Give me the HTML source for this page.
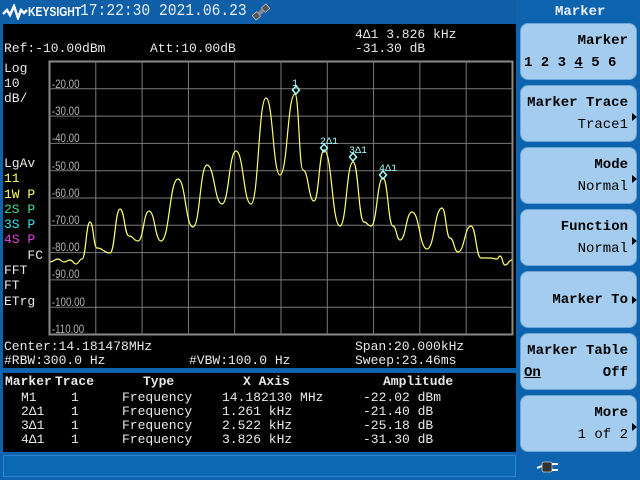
<!DOCTYPE html>
<html><head><meta charset="utf-8">
<style>
*{margin:0;padding:0;box-sizing:border-box}
body{width:640px;height:480px;background:#0d63ad;position:relative;overflow:hidden;font-family:"Liberation Mono",monospace;color:#e8e8e8}
.a{position:absolute;white-space:pre}
.t{font-size:13px;line-height:14px}
.hdr{position:absolute;left:0;top:0;width:516px;height:24px;background:#0f5ea8}
.main{position:absolute;left:3px;top:24px;width:513px;height:344px;background:#000}
.tbl{position:absolute;left:3px;top:373px;width:513px;height:79px;background:#000}
.status{position:absolute;left:3px;top:455px;width:513px;height:22px;background:#0b68b2;border:1px solid #2c84cc}
.sk{position:absolute;left:520px;width:117px;height:57px;background:#a3ccee;border-radius:8px;border:1px solid #6fa6d6;color:#000;font-family:"Liberation Mono",monospace}
.sk .l1{position:absolute;right:8px;top:9px;font-weight:bold;font-size:14px}
.sk .l2{position:absolute;right:8px;top:31px;font-size:14px}
.arr{position:absolute;right:-1px;top:27px;width:0;height:0;border-left:5px solid #000;border-top:4px solid transparent;border-bottom:4px solid transparent}
.b{font-weight:bold}
</style></head><body>
<div class="hdr"></div>
<svg class="a" style="left:2px;top:4px" width="26" height="16" viewBox="0 0 26 16"><path d="M1 10 L5 6 L8 11 L12 2 L16 14 L19 6 L22 9 L25 6" stroke="#fff" stroke-width="2.5" fill="none"/></svg>
<div class="a" style="left:28px;top:4px;font-family:'Liberation Sans',sans-serif;font-weight:bold;font-size:13px;color:#fff;transform:scaleX(0.8);transform-origin:left">KEYSIGHT</div>
<div class="a" style="left:80px;top:2px;font-size:17px;color:#e8f0ff;transform:scaleX(0.86);transform-origin:left">17:22:30 2021.06.23</div>
<svg class="a" style="left:250px;top:2px" width="22" height="20" viewBox="0 0 22 20"><g transform="rotate(-40 11 10)"><rect x="2" y="7" width="6" height="6" fill="#555" stroke="#ddd" stroke-width=".6"/><rect x="14" y="7" width="6" height="6" fill="#555" stroke="#ddd" stroke-width=".6"/><rect x="8" y="8" width="6" height="4" fill="#888"/></g></svg>
<div class="a" style="left:555px;top:4px;font-size:14px;color:#e8f0ff;font-weight:bold">Marker</div>

<div class="main"></div>
<div class="a t" style="left:4px;top:42px">Ref:-10.00dBm</div>
<div class="a t" style="left:150px;top:42px">Att:10.00dB</div>
<div class="a t" style="left:355px;top:28px">4Δ1 3.826 kHz</div>
<div class="a t" style="left:355px;top:42px">-31.30 dB</div>
<div class="a t" style="left:4px;top:61px;line-height:15px">Log
10
dB/</div>
<div class="a t" style="left:4px;top:156px;line-height:15.3px">LgAv
<span style="color:#ffff60">11</span>
<span style="color:#ffff60">1W P</span>
<span style="color:#40e090">2S P</span>
<span style="color:#40e0f0">3S P</span>
<span style="color:#e040e0">4S P</span>
   FC
FFT
FT
ETrg</div>

<svg class="a" style="left:0;top:0" width="640" height="480">
<g stroke="#7a7a7a" stroke-width="1" fill="none">
<rect x="49.5" y="61.5" width="463" height="273" stroke-width="2" stroke="#8a8a8a"/>
<path d="M95.8 61V335M142.1 61V335M188.4 61V335M234.7 61V335M281 61V335M327.3 61V335M373.6 61V335M419.9 61V335M466.2 61V335"/>
<path d="M49 88.8H512M49 116.1H512M49 143.4H512M49 170.7H512M49 198H512M49 225.3H512M49 252.6H512M49 279.9H512M49 307.2H512"/>
</g>
<g fill="#b0b0b0" font-family="Liberation Sans,sans-serif" font-size="11.5" transform="scale(0.85 1)">
<text x="61" y="88">-20.00</text><text x="61" y="115">-30.00</text><text x="61" y="142">-40.00</text><text x="61" y="170">-50.00</text><text x="61" y="197">-60.00</text><text x="61" y="224">-70.00</text><text x="61" y="251">-80.00</text><text x="61" y="278">-90.00</text><text x="61" y="306">-100.00</text><text x="61" y="333">-110.00</text>
</g>
<path id="tr" fill="none" stroke="#ffff70" stroke-width="1.2" d=""/>
<g stroke="#a8ffff" stroke-width="1.5" fill="none">
<path d="M296 86 L299.5 90 L296 94 L292.5 90Z"/><path d="M324 144 L327.5 148 L324 152 L320.5 148Z"/><path d="M353 153 L356.5 157 L353 161 L349.5 157Z"/><path d="M383 171 L386.5 175 L383 179 L379.5 175Z"/>
</g>
<g fill="#a8ffff" font-family="Liberation Mono,monospace" font-size="10">
<text x="292" y="86">1</text><text x="320" y="144">2Δ1</text><text x="349" y="153">3Δ1</text><text x="379" y="171">4Δ1</text>
</g>
</svg>

<div class="a t" style="left:4px;top:340px">Center:14.181478MHz</div>
<div class="a t" style="left:355px;top:340px">Span:20.000kHz</div>
<div class="a t" style="left:4px;top:354px">#RBW:300.0 Hz</div>
<div class="a t" style="left:189px;top:354px">#VBW:100.0 Hz</div>
<div class="a t" style="left:355px;top:354px">Sweep:23.46ms</div>

<div class="tbl"></div>
<div class="a t b" style="left:5px;top:375px">Marker</div>
<div class="a t b" style="left:55px;top:375px">Trace</div>
<div class="a t b" style="left:143px;top:375px">Type</div>
<div class="a t b" style="left:243px;top:375px">X Axis</div>
<div class="a t b" style="left:383px;top:375px">Amplitude</div>
<div class="a t" style="left:21px;top:391px">M1
2Δ1
3Δ1
4Δ1</div>
<div class="a t" style="left:71px;top:391px">1
1
1
1</div>
<div class="a t" style="left:122px;top:391px">Frequency
Frequency
Frequency
Frequency</div>
<div class="a t" style="left:222px;top:391px">14.182130 MHz
1.261 kHz
2.522 kHz
3.826 kHz</div>
<div class="a t" style="left:363px;top:391px">-22.02 dBm
-21.40 dB
-25.18 dB
-31.30 dB</div>
<div class="status"></div>

<div class="sk" style="top:23px"><div class="l1">Marker</div><div class="a" style="left:3px;top:31px;font-size:14px;font-weight:bold">1 2 3 <u>4</u> 5 6</div></div>
<div class="sk" style="top:85px"><div class="l1">Marker Trace</div><div class="l2">Trace1</div><div class="arr"></div></div>
<div class="sk" style="top:147px"><div class="l1">Mode</div><div class="l2">Normal</div><div class="arr"></div></div>
<div class="sk" style="top:209px"><div class="l1">Function</div><div class="l2">Normal</div><div class="arr"></div></div>
<div class="sk" style="top:271px"><div class="l1" style="top:20px">Marker To</div><div class="arr" style="top:24px"></div></div>
<div class="sk" style="top:333px"><div class="l1">Marker Table</div><div class="a b" style="left:3px;top:31px;font-size:14px"><u>On</u></div><div class="l2 b">Off</div></div>
<div class="sk" style="top:395px"><div class="l1">More</div><div class="l2">1 of 2</div><div class="arr"></div></div>
<svg class="a" style="left:536px;top:460px" width="26" height="14" viewBox="0 0 26 14"><rect x="6" y="2" width="10" height="10" rx="2" fill="#333" stroke="#ccc" stroke-width=".8"/><path d="M1 8 L6 6 M16 4 H22 M16 10 H22" stroke="#fff" stroke-width="2"/></svg>

<script>
var p=[[50,262],[58,259],[64,262],[70,260],[76,264],[82,259],[90,222],[97,248],[110,253],[120,209],[129,236],[138,241],[149,211],[161,241],[178,179],[193,227],[207,165],[222,204],[236,151],[251,204],[266,98],[280,175],[295,94],[303,170],[314,201],[324,150],[340,226],[353,162],[364,222],[371,226],[383,178],[393,226],[400,240],[412,212],[427,249],[442,208],[450,238],[458,252],[471,226],[481,258],[490,258],[497,259],[500,256],[505,265],[512,260]];
var d="M"+p[0][0]+" "+p[0][1];
for(var i=1;i<p.length;i++){var a=p[i-1],b=p[i],m=(b[0]-a[0])/2;d+=" C"+(a[0]+m)+" "+a[1]+" "+(b[0]-m)+" "+b[1]+" "+b[0]+" "+b[1];}
document.getElementById("tr").setAttribute("d",d);
</script>
</body></html>
